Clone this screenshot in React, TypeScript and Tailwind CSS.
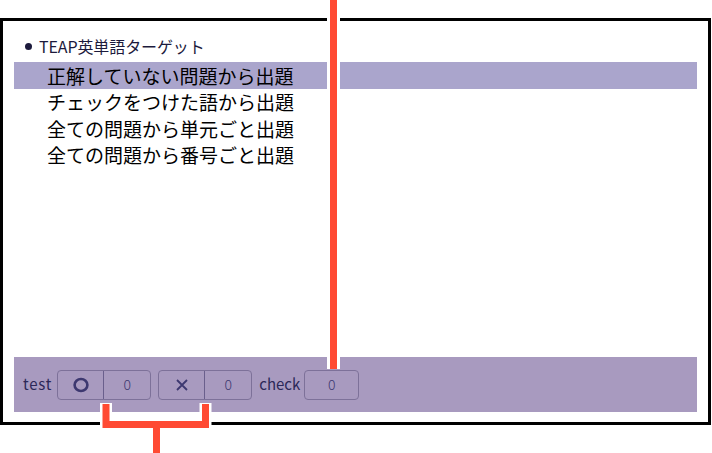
const FONT = { fontFamily: '"Noto Sans CJK JP", "Noto Sans", sans-serif' }

const MENU_ITEMS = [
  '正解していない問題から出題',
  'チェックをつけた語から出題',
  '全ての問題から単元ごと出題',
  '全ての問題から番号ごと出題',
]

function Circle() {
  return (
    <svg width="16" height="16" viewBox="0 0 16 16">
      <ellipse cx="8" cy="8" rx="6.4" ry="6" fill="none" stroke="#3d3870" strokeWidth="2.6" />
    </svg>
  )
}

function Cross() {
  return (
    <svg width="14" height="14" viewBox="0 0 14 14">
      <path d="M2 2 L12 12 M12 2 L2 12" stroke="#3d3870" strokeWidth="1.8" fill="none" />
    </svg>
  )
}

function CountBox({ icon, value }: { icon: React.ReactNode; value: number }) {
  return (
    <div className="flex h-[30px] w-[94px] items-center rounded-[4px] border border-[#7d7199]">
      <div className="flex h-full w-[46px] items-center justify-center border-r border-[#6a5f8c]">
        {icon}
      </div>
      <div className="flex flex-1 items-center justify-center text-[14px] font-light text-[#3d3870]">{value}</div>
    </div>
  )
}

export default function App() {
  return (
    <div className="relative h-[453px] w-[712px] overflow-hidden bg-white" style={FONT}>
      <div className="mt-[18px] flex h-[407px] w-[711px] flex-col border-[3px] border-black px-[11px] pb-[10px]">
        {/* Title */}
        <div className="flex h-[41px] items-center pl-[11px] pt-[9px] text-[16px] text-[#1c1a3c]">
          <span className="mr-[7px] inline-block h-[7px] w-[7px] rounded-full bg-[#1c1a3c]" />
          <span className="tracking-[-0.1px]">TEAP英単語ターゲット</span>
        </div>

        {/* Menu */}
        <div className="flex flex-col">
          {MENU_ITEMS.map((item, i) => (
            <div
              key={item}
              className={
                'flex h-[26.5px] items-center pl-[33px] text-[19px] leading-none text-black ' +
                (i === 0 ? 'bg-[#aaa5cc]' : '')
              }
            >
              {item}
            </div>
          ))}
        </div>

        <div className="flex-1" />

        {/* Bottom bar */}
        <div className="flex h-[55px] items-center bg-[#a89abf] pl-[9px] text-[15px] text-[#2c2858]">
          <span className="mr-[5px] tracking-[0.8px]">test</span>
          <CountBox icon={<Circle />} value={0} />
          <div className="w-[7px]" />
          <CountBox icon={<Cross />} value={0} />
          <span className="ml-[7px] mr-[4px]">check</span>
          <div className="flex h-[30px] w-[55px] items-center justify-center rounded-[4px] border border-[#7d7199] text-[14px] font-light text-[#3d3870]">
            0
          </div>
        </div>
      </div>

      {/* Annotation lines */}
      <svg className="pointer-events-none absolute left-0 top-0" width="712" height="453" viewBox="0 0 712 453">
        <g fill="none" strokeLinejoin="miter">
          <path d="M333.5 0 V369" stroke="#ffffff" strokeWidth="13" />
          <path d="M106 403 V424.5 H205.5 V403 M156.5 424.5 V453" stroke="#ffffff" strokeWidth="12" />
          <path d="M333.5 0 V369" stroke="#ff4a33" strokeWidth="7" />
          <path d="M106 404 V424.5 H205.5 V404 M156.5 424.5 V453" stroke="#ff4a33" strokeWidth="7" />
        </g>
      </svg>
    </div>
  )
}
